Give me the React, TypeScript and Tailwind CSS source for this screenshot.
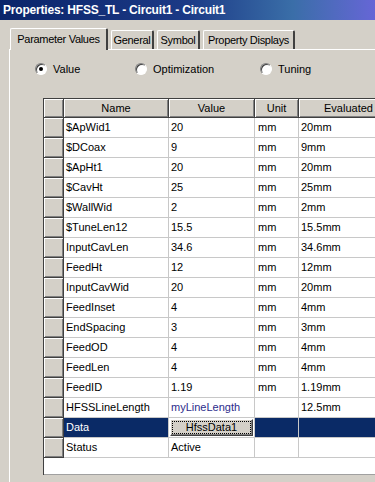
import React from "react";

type Row = { name: string; value: string; unit: string; evaluated: string };

const rows: Row[] = [
  { name: "$ApWid1", value: "20", unit: "mm", evaluated: "20mm" },
  { name: "$DCoax", value: "9", unit: "mm", evaluated: "9mm" },
  { name: "$ApHt1", value: "20", unit: "mm", evaluated: "20mm" },
  { name: "$CavHt", value: "25", unit: "mm", evaluated: "25mm" },
  { name: "$WallWid", value: "2", unit: "mm", evaluated: "2mm" },
  { name: "$TuneLen12", value: "15.5", unit: "mm", evaluated: "15.5mm" },
  { name: "InputCavLen", value: "34.6", unit: "mm", evaluated: "34.6mm" },
  { name: "FeedHt", value: "12", unit: "mm", evaluated: "12mm" },
  { name: "InputCavWid", value: "20", unit: "mm", evaluated: "20mm" },
  { name: "FeedInset", value: "4", unit: "mm", evaluated: "4mm" },
  { name: "EndSpacing", value: "3", unit: "mm", evaluated: "3mm" },
  { name: "FeedOD", value: "4", unit: "mm", evaluated: "4mm" },
  { name: "FeedLen", value: "4", unit: "mm", evaluated: "4mm" },
  { name: "FeedID", value: "1.19", unit: "mm", evaluated: "1.19mm" },
];

const cols = "grid grid-cols-[20px_105px_86px_44px_120px]";
const headCell =
  "h-[19px] flex items-center justify-center bg-[#d4d0c8] border-r border-b border-[#404040] shadow-[inset_1px_1px_0_#fff,inset_-1px_-1px_0_#808080]";
const rowHead =
  "h-[20px] bg-[#d4d0c8] border-r border-b border-[#404040] shadow-[inset_1px_1px_0_#fff,inset_-1px_-1px_0_#808080]";
const cellBase =
  "h-[20px] flex items-center pl-[2px] border-r border-b border-[#c8c8c8] whitespace-nowrap overflow-hidden";
const cell = cellBase + " bg-white";
const selCell = cellBase + " bg-[#0a2a66] text-white";
const tab =
  "h-[19px] ml-[3px] flex items-center justify-center border-t border-l border-white border-r-2 border-r-[#404040] rounded-t-[2px] tracking-[-0.3px]";

function Radio({ label, checked }: { label: string; checked?: boolean }) {
  return (
    <div className="flex items-center gap-[6px]">
      <span className="w-[12px] h-[12px] rounded-full bg-white border border-t-[#808080] border-l-[#808080] border-b-white border-r-white shadow-[inset_1px_1px_0_#404040] flex items-center justify-center">
        {checked && <span className="w-[4px] h-[4px] rounded-full bg-black" />}
      </span>
      <span>{label}</span>
    </div>
  );
}

export default function App() {
  return (
    <div
      className="w-[375px] h-[482px] overflow-hidden bg-[#d4d0c8] text-black text-[11px] leading-none flex flex-col"
      style={{ fontFamily: '"Liberation Sans", Arial, sans-serif' }}
    >
      {/* title bar */}
      <div className="h-[20px] shrink-0 flex items-center px-[3px] bg-[linear-gradient(to_right,#0a246a,#1c3a86_50%,#3a6ea8_78%,#6666d6)]">
        <span className="text-white font-bold text-[12px] tracking-[-0.2px]">
          Properties: HFSS_TL - Circuit1 - Circuit1
        </span>
      </div>

      {/* tabs */}
      <div className="h-[29px] shrink-0 flex items-end pl-[10px]">
        <div className="w-[98px] h-[22px] -mb-[1px] relative z-10 flex items-center justify-center bg-[#d4d0c8] border-t border-l border-white border-r-2 border-r-[#404040] rounded-t-[2px] tracking-[-0.3px]">
          Parameter Values
        </div>
        <div className={tab + " w-[43px]"}>General</div>
        <div className={tab + " w-[43px]"}>Symbol</div>
        <div className={tab + " w-[92px]"}>Property Displays</div>
      </div>

      {/* tab panel */}
      <div className="flex-1 ml-[9px] border-t border-l border-white flex flex-col">
        <div className="h-[14px] mt-[12px] flex items-center">
          <div className="w-[124px] pl-[25px]">
            <Radio label="Value" checked />
          </div>
          <div className="w-[126px] pl-[1px]">
            <Radio label="Optimization" />
          </div>
          <div>
            <Radio label="Tuning" />
          </div>
        </div>

        {/* parameter grid */}
        <div className="mt-[22px] ml-[33px] w-[400px] border-t border-l border-[#404040] bg-white">
          <div className={cols}>
            <div className={headCell} />
            <div className={headCell}>Name</div>
            <div className={headCell}>Value</div>
            <div className={headCell}>Unit</div>
            <div className={headCell + " justify-start pl-[25px]"}>Evaluated Value</div>
          </div>
          {rows.map((r) => (
            <div key={r.name} className={cols}>
              <div className={rowHead} />
              <div className={cell}>{r.name}</div>
              <div className={cell}>{r.value}</div>
              <div className={cell + " pl-[3px]"}>{r.unit}</div>
              <div className={cell}>{r.evaluated}</div>
            </div>
          ))}
          <div className={cols}>
            <div className={rowHead} />
            <div className={cell}>HFSSLineLength</div>
            <div className={cellBase + " bg-white text-[#2c2c8c]"}>myLineLength</div>
            <div className={cell} />
            <div className={cell}>12.5mm</div>
          </div>
          <div className={cols}>
            <div className={rowHead} />
            <div className={selCell}>Data</div>
            <div className="h-[20px] bg-white border-r border-b border-[#c8c8c8] p-[1px]">
              <div className="h-full flex items-center justify-center bg-[#d4d0c8] border border-t-white border-l-white border-r-[#404040] border-b-[#404040] shadow-[inset_-1px_-1px_0_#808080] outline-1 outline-dotted outline-offset-[-3px] outline-black">
                HfssData1
              </div>
            </div>
            <div className={selCell} />
            <div className={selCell} />
          </div>
          <div className={cols}>
            <div className={rowHead} />
            <div className={cell}>Status</div>
            <div className={cell}>Active</div>
            <div className={cell} />
            <div className={cell} />
          </div>
          <div className="h-[17px] bg-white border-b border-[#a0a0a0]" />
        </div>
      </div>
    </div>
  );
}
